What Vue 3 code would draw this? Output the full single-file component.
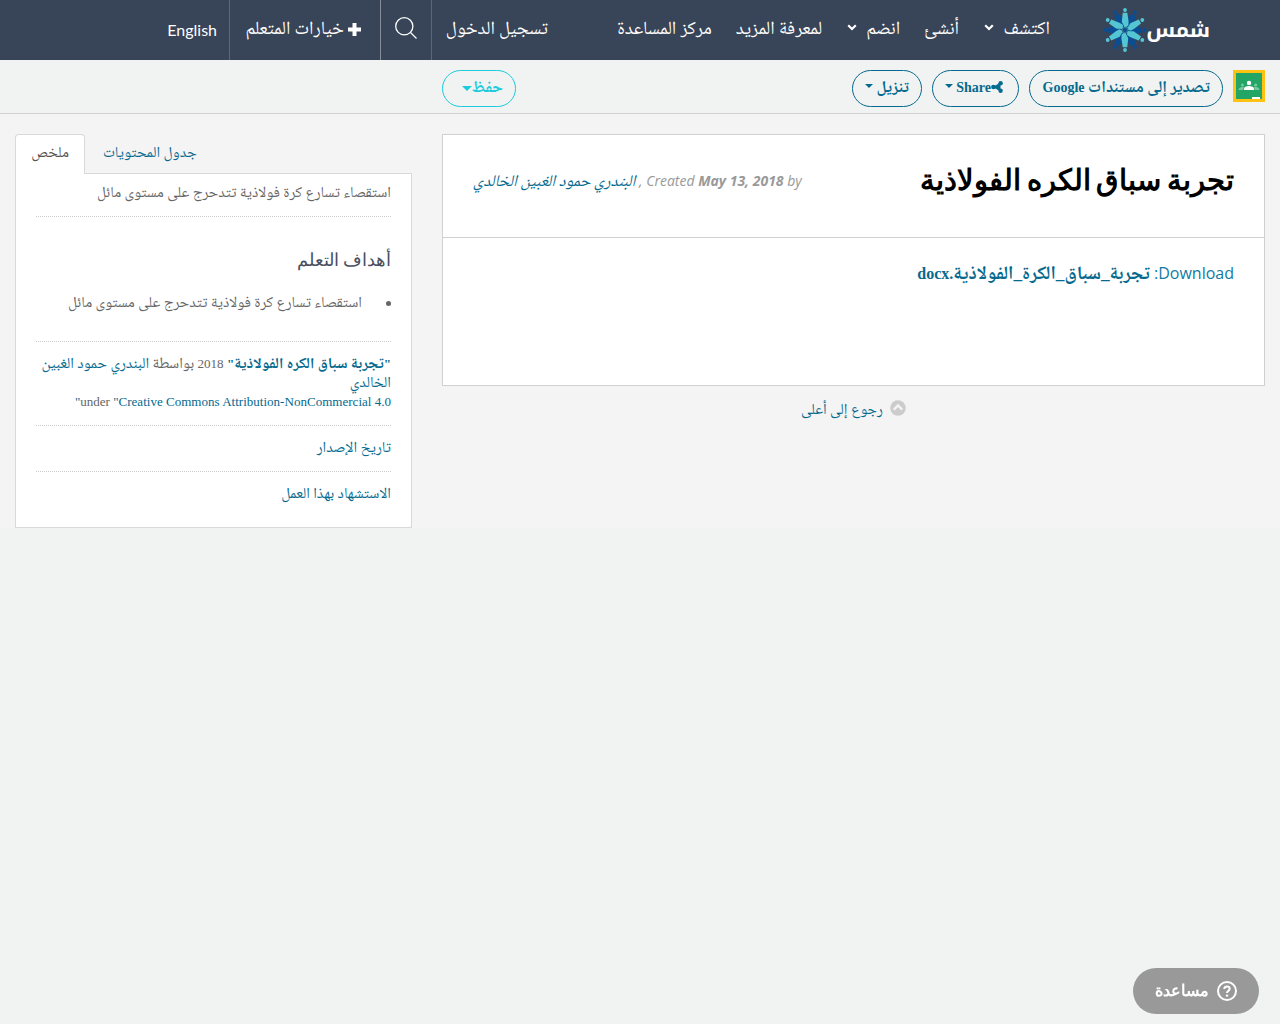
<script setup>
const rays = [30, 90, 150, 210, 270, 330, 0, 60, 120, 180, 240, 300].map((angle) => ({
    angle,
    light: angle % 60 === 0,
}));
</script>

<template>
    <div class="page" dir="rtl" lang="ar">
        <header class="topbar">
            <a class="logo" href="#">
                <span class="logo-name">شمس</span>
                <svg class="logo-mark" viewBox="-22 -22 44 44" width="44" height="44">
                    <g v-for="ray in rays" :key="ray.angle" :transform="`rotate(${ray.angle})`" :class="ray.light ? 'ray-light' : 'ray-dark'">
                        <circle cx="0" cy="-20" r="1.9" />
                        <path v-if="ray.light" d="M-2.300-17.200h4.600L3.600-8.500 3.400-4.500-1-1.500-1.200-4.500-3.200-8z" />
                        <path v-else d="M-2.500-17.200h5L4.500-8 3-3-1.500-1.500-3-5-4.200-8z" />
                    </g>
                    <circle class="mark-ring" r="3.2" />
                    <circle class="ray-dark" r="2" />
                </svg>
            </a>
            <nav class="main-nav">
                <a class="nav-item discover" href="#">اكتشف
                    <svg class="chevron" viewBox="0 0 10 7" width="10" height="7"><path d="M1.2 1.2 5 5l3.8-3.8" /></svg>
                </a>
                <a class="nav-item create" href="#">أنشئ</a>
                <a class="nav-item join" href="#">انضم
                    <svg class="chevron" viewBox="0 0 10 7" width="10" height="7"><path d="M1.2 1.2 5 5l3.8-3.8" /></svg>
                </a>
                <a class="nav-item more" href="#">لمعرفة المزيد</a>
                <a class="nav-item" href="#">مركز المساعدة</a>
            </nav>
            <div class="user-nav">
                <a class="user-item login" href="#">تسجيل الدخول</a>
                <a class="user-item search" href="#">
                    <svg viewBox="0 0 22 22" width="22" height="22"><circle cx="9.3" cy="9.3" r="8.6" /><path d="m15.5 15.5 6 6" /></svg>
                </a>
                <a class="user-item options" href="#">
                    <svg class="plus" viewBox="0 0 13 13" width="13" height="13"><path d="M4.500 0h4v4.500H13v4H8.500V13h-4V8.500H0v-4h4.500z" /></svg>
                    <span>خيارات المتعلم</span>
                </a>
                <a class="user-item language" href="#">English</a>
            </div>
        </header>

        <div class="toolbar">
            <svg class="classroom" viewBox="0 0 32 32" width="32" height="32">
                <path fill="#ffc112" d="M0 0h32v32H0z" />
                <path fill="#23a566" d="M3 3h26v26H3z" />
                <circle fill="#fff" cx="16" cy="13" r="2.2" />
                <path fill="#fff" d="M11 20v-1.2c0-1.8 2.2-2.8 5-2.8s5 1 5 2.8V20z" />
                <g fill="#79c9a0">
                    <circle cx="9.4" cy="15" r="1.5" /><circle cx="22.6" cy="15" r="1.5" />
                    <path d="M5.5 20c0-2 1.8-3 4-3l2 .3c-1 .6-1.2 1.6-1.2 2.7zM26.5 20c0-2-1.8-3-4-3l-2 .3c1 .6 1.2 1.6 1.2 2.7z" />
                </g>
                <path fill="#fff" d="M19 27h8v2h-8z" />
            </svg>
            <button type="button" class="pill export"><span class="ar">تصدير إلى مستندات</span> Google</button>
            <button type="button" class="pill share">
                <svg class="share-icon" viewBox="0 0 12 12" width="12" height="12"><path d="M9.500 2.300 3 6l6.500 3.700" /><circle cx="9.600" cy="2.300" r="2.200" /><circle cx="2.400" cy="6" r="2.300" /><circle cx="9.600" cy="9.700" r="2.200" /></svg>Share
                <i class="caret" />
            </button>
            <button type="button" class="pill download"><span class="ar">تنزيل</span> <i class="caret" /></button>
            <button type="button" class="pill save"><span class="ar">حفظ</span><i class="caret" /></button>
        </div>

        <main class="content">
            <div class="main-col">
                <article class="resource">
                    <header class="resource-head">
                        <h1>تجربة سباق الكره الفولاذية</h1>
                        <p class="meta" dir="ltr">
                            <a class="ar" href="#">البندري حمود الغبين الخالدي</a>
                            <span> , Created <b>May 13, 2018</b> by</span>
                        </p>
                    </header>
                    <a class="file" href="#">Download: <b><span class="ar">تجربة_سباق_الكرة_الفولاذية</span>.docx</b></a>
                </article>
                <a class="back-top" href="#">
                    <svg viewBox="0 0 16 16" width="16" height="16"><circle cx="8" cy="8" r="7.800" /><path d="m3.800 9.700 4.200-4.200 4.200 4.200" /></svg>
                    <span class="ar">رجوع إلى أعلى</span>
                </a>
            </div>

            <aside class="side-col">
                <div class="tabs">
                    <a class="tab contents" href="#"><span class="ar">جدول المحتويات</span></a>
                    <a class="tab active" href="#"><span class="ar">ملخص</span></a>
                </div>
                <div class="panel">
                    <p class="summary"><span class="ar">استقصاء تسارع كرة فولاذية تتدحرج على مستوى مائل</span></p>
                    <section class="goals">
                        <h2>أهداف التعلم</h2>
                        <ul>
                            <li><span class="ar">استقصاء تسارع كرة فولاذية تتدحرج على مستوى مائل</span></li>
                        </ul>
                    </section>
                    <p class="license">
                        <a href="#"><b>"<span class="ar">تجربة سباق الكره الفولاذية</span>"</b></a> 2018 <span class="ar">بواسطة</span> <a class="ar" href="#">البندري حمود الغبين الخالدي</a><br>
                        <span class="license-line" dir="ltr"><a href="#">"</a>under <a href="#">"Creative Commons Attribution-NonCommercial 4.0</a></span>
                    </p>
                    <a class="panel-link" href="#"><span class="ar">تاريخ الإصدار</span></a>
                    <a class="panel-link" href="#"><span class="ar">الاستشهاد بهذا العمل</span></a>
                </div>
            </aside>
        </main>

        <button type="button" class="help">
            <svg viewBox="0 0 20 20" width="20" height="20"><circle cx="10" cy="10" r="9" /><path d="M7.300 8c0-1.700 1.200-2.600 2.700-2.600s2.700 1 2.700 2.400c0 2-2.700 2-2.700 4.200" /><circle class="dot" cx="10" cy="14.600" r="1.200" /></svg>
            <span>مساعدة</span>
        </button>
    </div>
</template>

<style>
body{margin:0;background:#f0f3f2}
</style>

<style scoped>
.page{min-height:1024px;background:#f0f3f2;font-family:"Liberation Serif",serif;color:#666}
a{color:#066a8e;text-decoration:none}
button{font-family:inherit;margin:0;cursor:pointer}
.ar{font-family:"Noto Naskh Arabic","Liberation Serif",serif;font-size:1.18em;line-height:1}
.topbar{display:flex;height:60px;box-sizing:border-box;padding-right:70px;background:#384457}
.logo{display:flex;align-items:center;width:107px;height:60px;color:#fff}
.logo-name{flex:none;width:63px;height:60px;font:700 20.5px/61px "Noto Kufi Arabic","DejaVu Sans",sans-serif;white-space:nowrap}
.logo-mark{flex:none}
.ray-light{fill:#53c5d3}
.ray-dark{fill:#0b4d92}
.mark-ring{fill:#39758d}
.main-nav{display:flex;margin-right:53px;width:433px}
.nav-item{flex:none;color:#fff;font-family:"Noto Naskh Arabic","Liberation Serif",serif;font-size:18.7px;line-height:60px;white-space:nowrap;margin-left:24px}
.nav-item.discover{width:67px}
.nav-item.join{width:54px}
.chevron{margin-right:5px;vertical-align:3px;fill:none;stroke:#fff;stroke-width:2.2}
.user-nav{display:flex;margin-right:69px}
.user-item{box-sizing:border-box;height:60px;color:#fff;font-family:"Noto Naskh Arabic","Liberation Serif",serif;font-size:18.7px;line-height:60px;white-space:nowrap}
.login{width:117px;border-left:1px solid #5d6776}
.search{width:51px;padding:17px 14px;line-height:0;border-left:1px solid #868d97}
.search svg{fill:none;stroke:#fff;stroke-width:1.3}
.options{display:flex;gap:4px;width:151px;padding-right:19px;border-left:1px solid #5d6776}
.plus{fill:#fff;margin-top:23px}
.language{padding-right:12px;font:16px/60px Lato,sans-serif}
.toolbar{display:flex;gap:10px;box-sizing:border-box;height:54px;padding:10px 15px 0;border-bottom:1px solid #d0d3d2}
.classroom{flex:none}
.pill{box-sizing:border-box;height:37px;padding:0 12px 2px;border:1px solid #066a8e;border-radius:19px;background:transparent;color:#066a8e;font-size:14px;font-weight:700;line-height:33px;text-align:right;white-space:nowrap}
.pill .ar{font-size:16.4px}
.export{width:194px}
.share{width:87px;padding-right:15px}
.download{width:70px}
.save{width:74px;margin-right:326px;border-color:#1ccbdc;color:#1ccbdc}
.share-icon{vertical-align:-1px;fill:currentColor;stroke:currentColor;stroke-width:1.3}
.share-icon circle{stroke:none}
.caret{display:inline-block;vertical-align:4px;border:4px solid transparent;border-top-color:currentColor;border-bottom:0}
.save .caret{border-width:5px;border-bottom:0;vertical-align:1px}
.content{display:flex;gap:30px;height:414px;box-sizing:border-box;padding:20px 15px 0;background:#f4f4f4}
.main-col{width:823px}
.resource{box-sizing:border-box;height:252px;border:1px solid #d0d0d0;background:#fff}
.resource-head{display:flex;justify-content:space-between;height:102px;padding:0 30px;border-bottom:1px solid #d0d0d0}
h1{margin:0;color:#000;font:700 29px/87px "Open Sans",sans-serif;word-spacing:-2px;white-space:nowrap}
.meta{margin:0;color:#999;font:italic 14px/92px "Open Sans",sans-serif;white-space:nowrap}
.meta .ar{font-size:16.45px}
.file{display:block;padding:0 30px;font-family:"Open Sans",sans-serif;font-size:16px;line-height:70px;color:#0f7ba3}
.file b{font-family:"Liberation Serif",serif;color:#066a8e}
.back-top{display:flex;gap:7px;margin:14px 359px 0 0;font-size:13px;line-height:20px;white-space:nowrap}
.back-top .ar{line-height:22px}
.back-top svg{fill:#ccc}
.back-top path{fill:none;stroke:#f4f4f4;stroke-width:2.4}
.side-col{width:397px}
.tabs{display:flex;justify-content:flex-end;height:39px}
.tab{box-sizing:border-box;font-size:13px;line-height:38px;height:40px;white-space:nowrap}
.contents{padding-left:18px}
.tab.active{position:relative;width:70px;padding-right:15px;border:1px solid #d9d9d9;border-bottom:0;border-radius:4px 4px 0 0;background:#fff;color:#555;line-height:36px}
.panel{box-sizing:border-box;height:355px;padding:0 20px;border:1px solid #d9d9d9;background:#fff;font-size:13px}
.summary{box-sizing:border-box;margin:0;height:43px;line-height:37px;border-bottom:1px dotted #ccc}
.goals{box-sizing:border-box;height:125px;border-bottom:1px dotted #ccc}
h2{margin:0;padding-top:27px;font-size:18px;font-weight:400;line-height:32px;color:#494f63}
ul{margin:0;padding:16px 0 0;list-style:none}
li{display:flex;align-items:center;gap:24px;line-height:20px}
li .ar{line-height:24px}
li::before{content:"";width:5px;height:5px;margin-top:-1px;border-radius:50%;background:#666}
.license{box-sizing:border-box;height:84px;margin:0;padding-top:12px;font-size:13.06px;line-height:19px;border-bottom:1px dotted #ccc}
.license-line{display:block}
.license-line[dir=ltr]{text-align:right;margin-top:-1px}
.panel-link{display:block;height:45px;line-height:44px}
.panel-link:not(:last-child){border-bottom:1px dotted #ccc}
.help{position:fixed;left:1133px;bottom:10px;display:flex;align-items:center;gap:8px;box-sizing:border-box;width:126px;height:46px;padding:0 22px;border:0;border-radius:23px;background:#999;color:#fff;font:700 16px/46px "Open Sans",sans-serif}
.help span{margin-top:-2px}
.help svg{flex:none;fill:none;stroke:#fff;stroke-width:2}
.help .dot{fill:#fff;stroke:none}
</style>
